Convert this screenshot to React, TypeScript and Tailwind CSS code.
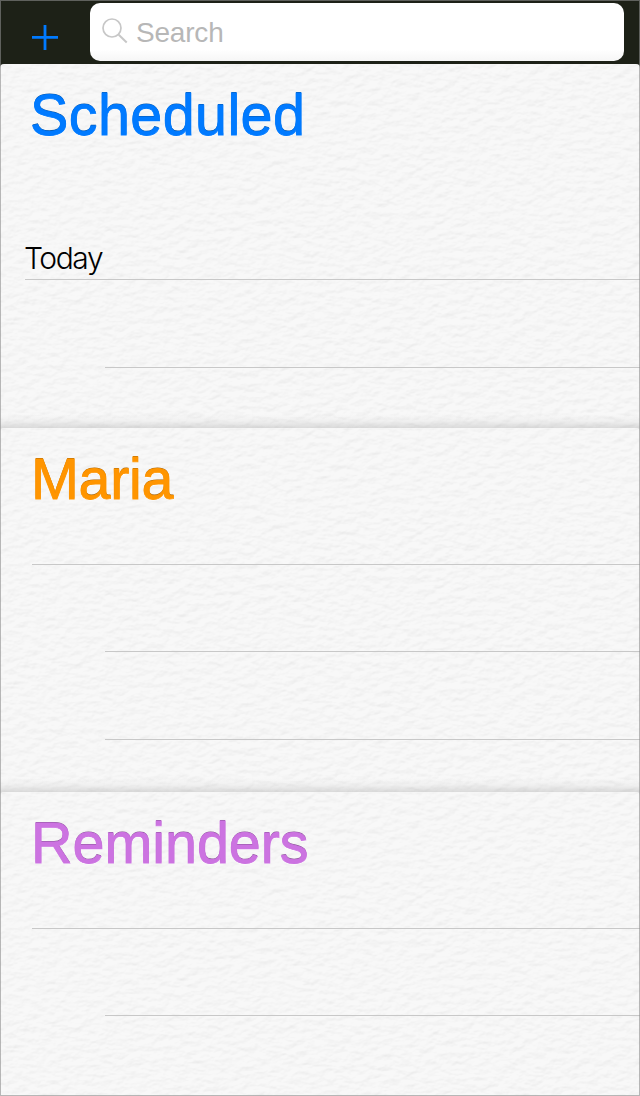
import React from "react";

function PaperTexture() {
  return (
    <svg className="pointer-events-none absolute inset-0 h-full w-full" aria-hidden="true">
      <filter id="paper" x="0" y="0" width="100%" height="100%" colorInterpolationFilters="sRGB">
        <feTurbulence type="fractalNoise" baseFrequency="0.09 0.15" numOctaves={3} seed={7} stitchTiles="stitch" result="noise" />
        <feDiffuseLighting in="noise" lightingColor="#ffffff" surfaceScale={0.8} diffuseConstant={1.12}>
          <feDistantLight azimuth={250} elevation={59} />
        </feDiffuseLighting>
      </filter>
      <rect width="100%" height="100%" filter="url(#paper)" opacity="0.2" />
    </svg>
  );
}

type CardProps = {
  title: string;
  titleClass: string;
  className: string;
  shaded?: boolean;
  children: React.ReactNode;
};

function Card({ title, titleClass, className, shaded, children }: CardProps) {
  return (
    <section className={"relative shrink-0 overflow-hidden rounded-t-[4px] bg-[#f7f7f7] " + className}>
      <PaperTexture />
      {shaded && (
        <div className="absolute inset-x-0 bottom-0 h-3.5 bg-gradient-to-b from-black/0 via-black/3 to-black/12" />
      )}
      <div className="relative flex h-full flex-col">
        <h2 className={"h-[100px] shrink-0 whitespace-nowrap pt-[18px] text-[57.5px] leading-[66px] " + titleClass}>
          {title}
        </h2>
        {children}
      </div>
    </section>
  );
}

function Row({ className }: { className: string }) {
  return <div className={"shrink-0 border-b border-[#c8c8c8] " + className} />;
}

export default function App() {
  return (
    <main className="relative flex h-[1096px] w-[640px] flex-col overflow-hidden bg-[#e0e0e0] font-['Liberation_Sans',Arial,sans-serif]">
      <header className="-mb-1 flex h-[68px] shrink-0 items-start bg-[#1d2117]">
        <button aria-label="Add" className="ml-8 mt-6 h-[26px] w-[26px]">
          <svg viewBox="0 0 26 26" className="h-[26px] w-[26px]" stroke="#007aff" strokeWidth="2.8">
            <path d="M13 1v25M0 13.4h26" />
          </svg>
        </button>
        <label className="ml-8 mt-[3px] flex h-[58px] w-[534px] items-center rounded-[10px] bg-gradient-to-b from-white from-80% to-[#f6f6f6]">
          <svg viewBox="0 0 26 26" className="-mt-[3px] ml-3 h-[26px] w-[26px]" fill="none" stroke="#c7c7c7" strokeWidth="1.7">
            <circle cx="10" cy="10" r="9" />
            <path d="M16.7 16.7 24.7 24.5" strokeWidth="2" />
          </svg>
          <span className="ml-2 pt-0.5 text-[28px] leading-8 tracking-[-0.2px] text-[#b7b7b7]">Search</span>
        </label>
      </header>

      <Card
        title="Scheduled"
        shaded
        className="h-[364px]"
        titleClass="pl-[30px] tracking-[0.4px] text-[#007aff] [-webkit-text-stroke:0.8px_#007aff] [text-shadow:0_-1px_0_#0755a5,0_1px_0_#fff]"
      >
        <div className="ml-[25px] mt-[76px] h-10 shrink-0 border-b border-[#c8c8c8] font-['Inter',sans-serif] text-[30px] font-light leading-9 tracking-[-1.4px] text-black">
          <span className="-ml-px">Today</span>
        </div>
        <Row className="ml-[105px] h-[88px]" />
      </Card>

      <Card
        title="Maria"
        shaded
        className="h-[364px]"
        titleClass="pl-[31px] tracking-[-0.3px] text-[#ff9500] [-webkit-text-stroke:0.8px_#ff9500] [text-shadow:0_-1px_0_#a66308,0_1px_0_#fff]"
      >
        <Row className="ml-8 h-[37px]" />
        <Row className="ml-[105px] h-[87px]" />
        <Row className="ml-[105px] h-[88px]" />
      </Card>

      <Card
        title="Reminders"
        className="h-[304px]"
        titleClass="pl-[31px] tracking-[-0.05px] text-[#cc73e1] [-webkit-text-stroke:0.8px_#cc73e1] [text-shadow:0_-1px_0_#865094,0_1px_0_#fff]"
      >
        <Row className="ml-8 h-[37px]" />
        <Row className="ml-[105px] h-[87px]" />
      </Card>

      <div className="pointer-events-none absolute inset-0 border border-[#8c8c8c]/60" />
    </main>
  );
}
